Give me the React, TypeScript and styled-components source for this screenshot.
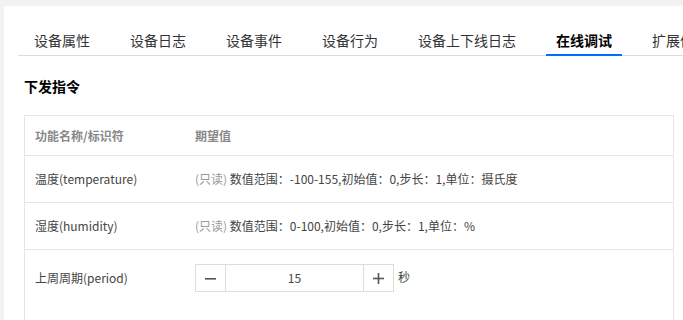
import React from "react";
import styled, { createGlobalStyle } from "styled-components";

const GlobalStyle = createGlobalStyle`
  html, body {
    margin: 0;
    padding: 0;
    background: #f2f2f2;
    overflow: hidden;
  }
  body {
    font-family: "Noto Sans CJK SC", "Microsoft YaHei", sans-serif;
    color: #444;
  }
`;

const Panel = styled.div`
  margin: 6px 0 0 4px;
  width: 720px;
  min-height: 400px;
  background: #fff;
  padding-top: 19px;
  box-sizing: border-box;
`;

const TabBar = styled.div`
  margin: 0 0 0 14px;
  width: 700px;
  display: flex;
  gap: 20px;
  padding-left: 6px;
  border-bottom: 1px solid #dcdcdc;
  box-sizing: border-box;
`;

const Tab = styled.div<{ $active?: boolean }>`
  padding: 0 10px;
  height: 30px;
  line-height: 30px;
  font-size: 14px;
  white-space: nowrap;
  color: ${(p) => (p.$active ? "#000" : "#333")};
  font-weight: ${(p) => (p.$active ? 700 : 400)};
  position: relative;
  &::after {
    content: "";
    display: ${(p) => (p.$active ? "block" : "none")};
    position: absolute;
    left: 0;
    right: 0;
    bottom: -1px;
    height: 2px;
    background: #006eff;
  }
`;

const Content = styled.div`
  padding: 0 0 0 20px;
`;

const Heading = styled.h3`
  margin: 0;
  padding-top: 19px;
  height: 59px;
  line-height: 22px;
  font-size: 14px;
  font-weight: 700;
  color: #000;
  box-sizing: border-box;
`;

const Table = styled.div`
  width: 650px;
  border: 1px solid #e5e5e5;
  box-sizing: border-box;
`;

const Row = styled.div<{ $head?: boolean }>`
  display: grid;
  grid-template-columns: 160px 1fr;
  align-items: center;
  min-height: ${(p) => (p.$head ? "39px" : "46px")};
  border-bottom: 1px solid #e5e5e5;
  font-size: 12px;
  color: ${(p) => (p.$head ? "#888" : "#444")};
  font-weight: ${(p) => (p.$head ? 700 : 400)};
  &:last-child {
    border-bottom: none;
    align-items: start;
    min-height: 120px;
  }
`;

const Cell = styled.div<{ $pad?: string }>`
  padding: ${(p) => p.$pad ?? "0 10px"};
  line-height: 18px;
  white-space: nowrap;
`;

const Muted = styled.span`
  color: #999;
`;

const StepRow = styled.div`
  display: flex;
  align-items: center;
  gap: 4px;
`;

const Stepper = styled.div`
  display: flex;
  height: 28px;
  border: 1px solid #ddd;
  box-sizing: border-box;
  width: 199px;
`;

const StepBtn = styled.button<{ $side: "l" | "r" }>`
  width: 30px;
  height: 100%;
  border: none;
  ${(p) => (p.$side === "l" ? "border-right" : "border-left")}: 1px solid #ddd;
  background: #fff;
  padding: 0;
  display: flex;
  align-items: center;
  justify-content: center;
  color: #555;
  flex: none;
`;

const StepValue = styled.div`
  flex: 1;
  text-align: center;
  line-height: 26px;
  font-size: 12px;
  color: #444;
`;

const Unit = styled.span`
  font-size: 12px;
  color: #444;
  margin-top: -2px;
`;

const Minus = () => (
  <svg width="11" height="11" viewBox="0 0 11 11">
    <rect x="0" y="5" width="11" height="1.6" fill="#555" />
  </svg>
);
const Plus = () => (
  <svg width="11" height="11" viewBox="0 0 11 11">
    <rect x="0" y="4.7" width="11" height="1.6" fill="#555" />
    <rect x="4.7" y="0" width="1.6" height="11" fill="#555" />
  </svg>
);

const tabs = ["设备属性", "设备日志", "设备事件", "设备行为", "设备上下线日志", "在线调试", "扩展信息"];

export default function App() {
  return (
    <>
      <GlobalStyle />
      <Panel>
        <TabBar>
          {tabs.map((t) => (
            <Tab key={t} $active={t === "在线调试"}>
              {t}
            </Tab>
          ))}
        </TabBar>
        <Content>
          <Heading>下发指令</Heading>
          <Table>
            <Row $head>
              <Cell>功能名称/标识符</Cell>
              <Cell>期望值</Cell>
            </Row>
            <Row>
              <Cell>温度(temperature)</Cell>
              <Cell>
                <Muted>(只读)</Muted> 数值范围：-100-155,初始值：0,步长：1,单位：摄氏度
              </Cell>
            </Row>
            <Row>
              <Cell>湿度(humidity)</Cell>
              <Cell>
                <Muted>(只读)</Muted> 数值范围：0-100,初始值：0,步长：1,单位：%
              </Cell>
            </Row>
            <Row>
              <Cell $pad="19px 10px">上周周期(period)</Cell>
              <Cell $pad="14px 10px">
                <StepRow>
                  <Stepper>
                    <StepBtn $side="l">
                      <Minus />
                    </StepBtn>
                    <StepValue>15</StepValue>
                    <StepBtn $side="r">
                      <Plus />
                    </StepBtn>
                  </Stepper>
                  <Unit>秒</Unit>
                </StepRow>
              </Cell>
            </Row>
          </Table>
        </Content>
      </Panel>
    </>
  );
}
